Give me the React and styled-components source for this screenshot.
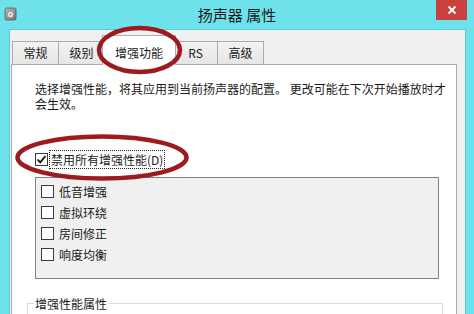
import React from "react";
import styled, { createGlobalStyle } from "styled-components";

const Global = createGlobalStyle`
  html, body { margin: 0; padding: 0; background: #6ee2ea; }
  body { font-family: "Noto Sans CJK SC", sans-serif; }
`;

const Window = styled.div`
  position: relative;
  width: 474px;
  height: 314px;
  overflow: hidden;
  background: #6ee2ea;
  display: flex;
  flex-direction: column;
  font-family: "Noto Sans CJK SC", "Noto Sans", sans-serif;
  font-size: 12px;
  color: #1a1a1a;
`;

const TitleBar = styled.div`
  height: 29px;
  flex: none;
  display: grid;
  grid-template-columns: 1fr auto 1fr;
  align-items: start;
`;

const TitleIcon = styled.svg`
  margin: 7px 0 0 4px;
  display: block;
`;

const Title = styled.div`
  font-size: 15px;
  line-height: 20px;
  margin-top: 5px;
  color: #1a1a1a;
`;

const CloseButton = styled.div`
  justify-self: end;
  margin-right: 7px;
  width: 31px;
  height: 20px;
  background: #c8413f;
  display: flex;
  align-items: center;
  justify-content: center;
`;

const Client = styled.div`
  flex: 1;
  min-height: 0;
  margin: 0 8px 0 9px;
  background: #f0f0f0;
  border: 1px solid #5cc9d0;
  border-bottom: none;
  padding: 0 8px 0 1px;
  display: flex;
  flex-direction: column;
`;

const TabStrip = styled.div`
  height: 34px;
  flex: none;
  display: flex;
  align-items: flex-end;
  padding-left: 1px;
`;

const Tab = styled.div`
  position: relative;
  z-index: ${(p) => (p.$active ? 2 : 1)};
  box-sizing: border-box;
  height: ${(p) => (p.$active ? 30 : 23)}px;
  min-width: 45px;
  padding: ${(p) => (p.$active ? "6px 12px 0" : "0 10.5px")};
  margin: ${(p) => (p.$active ? "0 -3px -1px -2px" : "0 -1px 0 0")};
  border: 1px solid #acacac;
  border-bottom: none;
  background: ${(p) =>
    p.$active ? "#ffffff" : "linear-gradient(#f2f2f2, #e6e6e6)"};
  line-height: 21px;
  text-align: center;
  white-space: nowrap;
`;

const Panel = styled.div`
  position: relative;
  flex: 1;
  background: #ffffff;
  border: 1px solid #acacac;
  border-bottom: none;
  padding: 16px 5px 0 23px;
`;

const Description = styled.p`
  margin: 0;
  line-height: 15px;
`;

const MasterRow = styled.div`
  margin-top: 39px;
  height: 19px;
  display: flex;
  align-items: center;
`;

const Box = styled.span`
  box-sizing: border-box;
  width: 13px;
  height: 13px;
  flex: none;
  border: 1px solid #3c3c3c;
  background: #ffffff;
  display: flex;
  align-items: center;
  justify-content: center;
`;

const FocusLabel = styled.span`
  margin-left: 1px;
  padding: 0 1px;
  line-height: 17px;
  border: 1px dotted #222;
`;

const ListBox = styled.div`
  margin-top: 8px;
  width: 404px;
  height: 102px;
  box-sizing: border-box;
  border: 1px solid #828282;
  background: #f0f0f0;
  padding: 3px 0 0 5px;
`;

const ListItem = styled.div`
  height: 21px;
  display: flex;
  align-items: center;
  gap: 5px;
  line-height: 15px;
`;

const GroupBox = styled.fieldset`
  margin: 17px 0 0 -8px;
  width: 416px;
  height: 40px;
  box-sizing: border-box;
  border: 1px solid #dcdcdc;
  padding: 0;
`;

const GroupLegend = styled.legend`
  margin-left: 6px;
  padding: 0 1px;
  line-height: 15px;
`;

const Annotation = styled.svg`
  position: absolute;
  left: 0;
  top: 0;
  pointer-events: none;
  z-index: 5;
`;

function CheckBox({ checked }) {
  return (
    <Box>
      {checked && (
        <svg width="11" height="11" viewBox="0 0 11 11">
          <path d="M1.5 5.5 L4.2 8.3 L9.5 2" fill="none" stroke="#111" strokeWidth="1.8" />
        </svg>
      )}
    </Box>
  );
}

const tabs = ["常规", "级别", "增强功能", "RS", "高级"];
const items = ["低音增强", "虚拟环绕", "房间修正", "响度均衡"];

export default function App() {
  return (
    <>
      <Global />
      <Window>
        <TitleBar>
          <TitleIcon width="13" height="14" viewBox="0 0 13 14">
            <defs>
              <linearGradient id="spk" x1="0" y1="0" x2="1" y2="1">
                <stop offset="0" stopColor="#b9b9b9" />
                <stop offset="1" stopColor="#6f6f6f" />
              </linearGradient>
            </defs>
            <rect x="1" y="1" width="11" height="12" rx="1.5" fill="url(#spk)" stroke="#5a5a5a" strokeWidth="0.8" />
            <circle cx="6.5" cy="7.5" r="3.2" fill="#e6e6e6" stroke="#7a7a7a" strokeWidth="0.6" />
            <circle cx="6.5" cy="7.5" r="1.1" fill="#9a9a9a" />
          </TitleIcon>
          <Title>扬声器 属性</Title>
          <CloseButton>
            <svg width="10" height="10" viewBox="0 0 10 10">
              <path d="M1.5 1.5 L8.5 8.5 M8.5 1.5 L1.5 8.5" stroke="#fff" strokeWidth="1.8" />
            </svg>
          </CloseButton>
        </TitleBar>
        <Client>
          <TabStrip>
            {tabs.map((t) => (
              <Tab key={t} $active={t === "增强功能"}>
                {t}
              </Tab>
            ))}
          </TabStrip>
          <Panel>
            <Description>
              选择增强性能，将其应用到当前扬声器的配置。 更改可能在下次开始播放时才
              <br />
              会生效。
            </Description>
            <MasterRow>
              <CheckBox checked />
              <FocusLabel>禁用所有增强性能(D)</FocusLabel>
            </MasterRow>
            <ListBox>
              {items.map((it) => (
                <ListItem key={it}>
                  <CheckBox />
                  <span>{it}</span>
                </ListItem>
              ))}
            </ListBox>
            <GroupBox>
              <GroupLegend>增强性能属性</GroupLegend>
            </GroupBox>
          </Panel>
        </Client>
        <Annotation width="474" height="314" viewBox="0 0 474 314">
          <ellipse cx="139.5" cy="50" rx="40.5" ry="22" fill="none" stroke="#9d1b20" strokeWidth="4.5" />
          <ellipse cx="102" cy="157.5" rx="84.5" ry="21" fill="none" stroke="#9d1b20" strokeWidth="4.5" />
        </Annotation>
      </Window>
    </>
  );
}
